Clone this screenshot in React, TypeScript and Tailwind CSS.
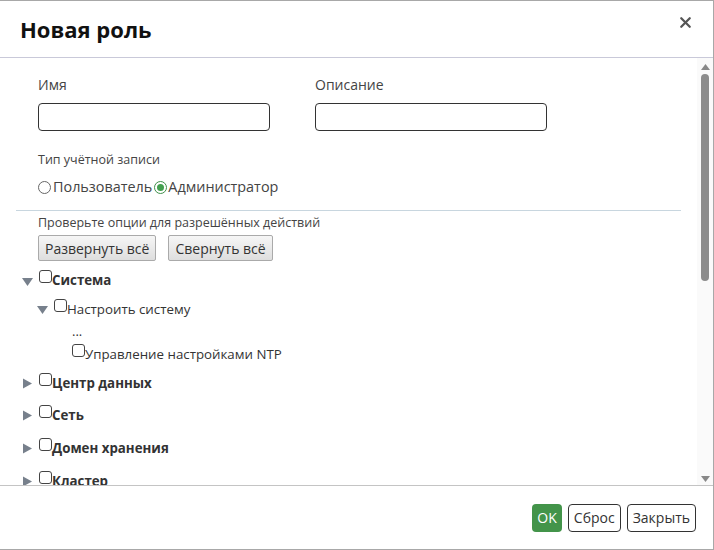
import React from 'react'
import { X } from 'lucide-react'

const font = { fontFamily: '"Open Sans", "Noto Sans", sans-serif' }

interface NodeProps {
  label: string
  bold?: boolean
  arrow?: 'down' | 'right' | null
  indent: number
  className?: string
}

const Arrow: React.FC<{ dir: 'down' | 'right' }> = ({ dir }) => (
  <svg width="11" height="11" viewBox="0 0 11 11" className="shrink-0">
    {dir === 'down' ? (
      <polygon points="0,2 11,2 5.5,10" fill="#77808c" />
    ) : (
      <polygon points="1,0.5 10,5.5 1,10.5" fill="#77808c" />
    )}
  </svg>
)

const Box = () => (
  <span className="inline-block w-[13px] h-[13px] border border-[#444] rounded-[3px] bg-white shrink-0 -mt-[9px]" />
)

const TreeRow: React.FC<NodeProps> = ({ label, bold, arrow, indent, className }) => (
  <div className={`flex items-center ${className ?? ''}`} style={{ paddingLeft: indent }}>
    <div className="w-[17px] flex items-center">{arrow && <Arrow dir={arrow} />}</div>
    <Box />
    <span className={`text-[13.3px] text-[#333] ${bold ? 'font-bold' : ''}`}>{label}</span>
  </div>
)

export default function App() {
  return (
    <div className="w-[714px] h-[550px] bg-white border-t border-r border-b border-[#a8a8a8] flex flex-col overflow-hidden" style={font}>
      <div className="h-[57px] shrink-0 flex items-center justify-between pl-[20px] pr-[20px] border-b border-[#c9c9d9]">
        <h1 className="text-[22px] font-bold text-[#111]">Новая роль</h1>
        <X className="w-[17px] h-[17px] text-[#555] -mt-[13px] mr-[-1px]" strokeWidth={3.2} />
      </div>

      <div className="flex-1 flex min-h-0">
        <div className="flex-1 overflow-hidden pt-[17px]">
          <div className="flex gap-[45px] pl-[38px]">
            <div className="flex flex-col">
              <label className="text-[14px] text-[#444] leading-[20px]">Имя</label>
              <div className="mt-[8px] w-[232px] h-[28px] border border-[#333] rounded-[4px]" />
            </div>
            <div className="flex flex-col">
              <label className="text-[14px] text-[#444] leading-[20px]">Описание</label>
              <div className="mt-[8px] w-[232px] h-[28px] border border-[#333] rounded-[4px]" />
            </div>
          </div>

          <div className="pl-[38px] mt-[20px] text-[12.5px] text-[#444] leading-[18px]">Тип учётной записи</div>
          <div className="pl-[38px] mt-[8px] flex items-center text-[14.4px] text-[#444] leading-[20px]">
            <span className="inline-block w-[13px] h-[13px] rounded-full border border-[#666] mr-[2px]" />
            <span>Пользователь</span>
            <span className="inline-flex items-center justify-center w-[13px] h-[13px] rounded-full border border-[#3f8f4a] ml-[2px] mr-[1px]">
              <span className="w-[7px] h-[7px] rounded-full bg-[#43a04f]" />
            </span>
            <span>Администратор</span>
          </div>

          <div className="ml-[16px] mr-[16px] mt-[13px] border-t border-[#c8d6df]" />

          <div className="pl-[38px] mt-[3px] text-[12.5px] text-[#444] leading-[18px]">Проверьте опции для разрешённых действий</div>
          <div className="pl-[38px] mt-[3px] flex gap-[12px]">
            <button className="h-[26px] px-[6px] text-[14px] text-[#333] border border-[#aaa] rounded-[2px] bg-gradient-to-b from-[#f6f6f6] to-[#dedede]">Развернуть всё</button>
            <button className="h-[26px] px-[6px] text-[14px] text-[#333] border border-[#aaa] rounded-[2px] bg-gradient-to-b from-[#f6f6f6] to-[#dedede]">Свернуть всё</button>
          </div>

          <div className="mt-[6px] flex flex-col">
            <TreeRow label="Система" bold arrow="down" indent={22} className="h-[28px]" />
            <TreeRow label="Настроить систему" arrow="down" indent={37} className="h-[29px]" />
            <div className="pl-[72px] h-[17px] text-[13px] text-[#333] leading-[14px]">...</div>
            <TreeRow label="Управление настройками NTP" indent={55} className="h-[27px]" />
            <TreeRow label="Центр данных" bold arrow="right" indent={22} className="h-[31px]" />
            <TreeRow label="Сеть" bold arrow="right" indent={22} className="h-[33px]" />
            <TreeRow label="Домен хранения" bold arrow="right" indent={22} className="h-[33px]" />
            <TreeRow label="Кластер" bold arrow="right" indent={22} className="h-[33px]" />
          </div>
        </div>

        <div className="w-[16px] shrink-0 bg-[#fafafa] flex flex-col items-center pt-[6px] pb-[3px]">
          <svg width="9" height="6" viewBox="0 0 9 6"><polygon points="0,6 9,6 4.5,0" fill="#888" /></svg>
          <div className="mt-[4px] w-[8px] h-[207px] rounded-full bg-[#8c8c8c]" />
          <div className="flex-1" />
          <svg width="9" height="6" viewBox="0 0 9 6"><polygon points="0,0 9,0 4.5,6" fill="#888" /></svg>
        </div>
      </div>

      <div className="h-[64px] shrink-0 border-t border-[#c4c4c4] flex items-center justify-end gap-[6px] pr-[17px]">
        <button className="h-[28px] px-[5px] rounded-[4px] bg-[#43944a] text-white text-[14px]">OK</button>
        <button className="h-[28px] px-[5px] rounded-[4px] border border-[#333] text-[#333] text-[14px]">Сброс</button>
        <button className="h-[28px] px-[5px] rounded-[4px] border border-[#333] text-[#333] text-[14px]">Закрыть</button>
      </div>
    </div>
  )
}
